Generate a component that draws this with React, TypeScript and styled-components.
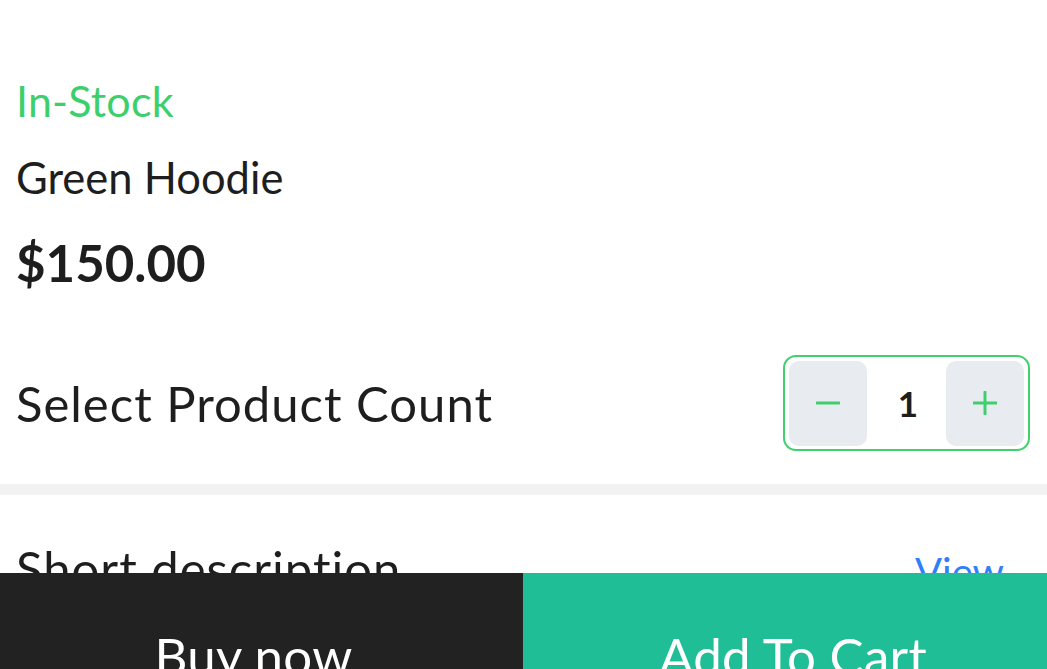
import React, { useState } from "react";
import styled, { createGlobalStyle } from "styled-components";

const Global = createGlobalStyle`
  html, body { margin: 0; padding: 0; background: #ffffff; }
  body { font-family: "Lato", "Noto Sans", sans-serif; color: #1e1e1e; overflow: hidden; }
  * { box-sizing: border-box; }
`;

const Page = styled.div`
  display: flex;
  flex-direction: column;
  min-height: 900px;
`;

const Info = styled.section`
  display: flex;
  flex-direction: column;
  padding: 75px 16px 0;
`;

const Stock = styled.div`
  color: #3ecf6d;
  font-size: 43px;
  line-height: 52px;
  letter-spacing: 0.2px;
`;

const Name = styled.h1`
  margin: 24px 0 0;
  font-size: 43.5px;
  font-weight: 400;
  line-height: 52px;
`;

const Price = styled.div`
  margin-top: 30px;
  font-size: 51px;
  font-weight: 700;
  line-height: 60px;
`;

const CountRow = styled.div`
  display: flex;
  align-items: center;
  justify-content: space-between;
  padding: 0 17px 0 16px;
  margin-top: 62px;
  height: 96px;
`;

const RowLabel = styled.span`
  font-size: 49px;
  line-height: 60px;
  letter-spacing: 1px;
`;

const Counter = styled.div`
  display: flex;
  align-items: center;
  width: 247px;
  height: 96px;
  padding: 4px;
  border: 2.5px solid #42cf6e;
  border-radius: 13px;
`;

const StepButton = styled.button`
  width: 78px;
  height: 85px;
  border: none;
  border-radius: 10px;
  background: #e8ebf0;
  display: flex;
  align-items: center;
  justify-content: center;
  padding: 0;
  cursor: pointer;
`;

const Value = styled.span`
  flex: 1;
  text-align: center;
  font-size: 35px;
  font-weight: 700;
  color: #1e1e1e;
  padding-left: 3px;
`;

const Divider = styled.div`
  height: 11px;
  background: #f2f2f2;
  margin-top: 33px;
`;

const DescRow = styled.div`
  display: flex;
  justify-content: space-between;
  align-items: baseline;
  padding: 43px 43px 0 16px;
`;

const DescTitle = styled.span`
  font-size: 49px;
  line-height: 60px;
  letter-spacing: 1px;
`;

const ViewLink = styled.a`
  color: #2f80f7;
  font-size: 40px;
  line-height: 60px;
  text-decoration: none;
`;

const ActionBar = styled.div`
  position: fixed;
  left: 0;
  right: 0;
  top: 573px;
  height: 192px;
  display: grid;
  grid-template-columns: 523px 1fr;
`;

const ActionButton = styled.button<{ $variant: "dark" | "teal" }>`
  border: none;
  margin: 0;
  padding: ${(p) => (p.$variant === "dark" ? "53px 16px 0 0" : "53px 0 0 16px")};
  display: flex;
  justify-content: center;
  align-items: flex-start;
  background: ${(p) => (p.$variant === "dark" ? "#222222" : "#20be96")};
  color: #ffffff;
  font-family: "Lato", "Noto Sans", sans-serif;
  font-size: 51px;
  line-height: 60px;
  letter-spacing: 0.3px;
`;

const Minus = () => (
  <svg width="24" height="24" viewBox="0 0 24 24">
    <path d="M1 12h22" stroke="#3ecf6d" strokeWidth="3" strokeLinecap="round" />
  </svg>
);

const Plus = () => (
  <svg width="24" height="24" viewBox="0 0 24 24">
    <path d="M1 12h22M12 1v22" stroke="#3ecf6d" strokeWidth="3" strokeLinecap="round" />
  </svg>
);

export default function App() {
  const [count, setCount] = useState(1);
  return (
    <Page>
      <Global />
      <Info>
        <Stock>In-Stock</Stock>
        <Name>Green Hoodie</Name>
        <Price>$150.00</Price>
      </Info>
      <CountRow>
        <RowLabel>Select Product Count</RowLabel>
        <Counter>
          <StepButton aria-label="decrease" onClick={() => setCount((c) => Math.max(1, c - 1))}>
            <Minus />
          </StepButton>
          <Value>{count}</Value>
          <StepButton aria-label="increase" onClick={() => setCount((c) => c + 1)}>
            <Plus />
          </StepButton>
        </Counter>
      </CountRow>
      <Divider />
      <DescRow>
        <DescTitle>Short description</DescTitle>
        <ViewLink href="#">View</ViewLink>
      </DescRow>
      <ActionBar>
        <ActionButton $variant="dark">Buy now</ActionButton>
        <ActionButton $variant="teal">Add To Cart</ActionButton>
      </ActionBar>
    </Page>
  );
}
